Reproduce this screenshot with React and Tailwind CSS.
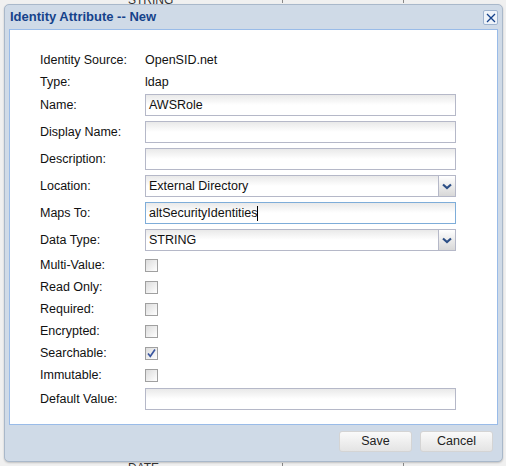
import { useState } from 'react'

const FONT = { fontFamily: '"Liberation Sans", Arial, sans-serif' }

function TextField({ value = '', focused = false }) {
  return (
    <div
      className={`h-[22px] w-[311px] flex items-center px-[3px] border text-[12.5px] text-[#111] bg-gradient-to-b from-[#e9e9e9] via-white to-white ${focused ? 'border-[#7eadd9]' : 'border-[#b5b8c8]'}`}
    >
      <span>{value}</span>
      {focused && <span className="w-px h-[15px] bg-black" />}
    </div>
  )
}

function Combo({ value }) {
  return (
    <div className="h-[22px] w-[311px] flex border border-[#b5b8c8] text-[12.5px] text-[#111]">
      <div className="flex-1 flex items-center px-[3px] bg-gradient-to-b from-[#e9e9e9] via-white to-white">{value}</div>
      <div className="w-[17px] border-l border-[#b5b8c8] flex items-center justify-center bg-gradient-to-b from-white to-[#d8d8d8]">
        <svg width="10" height="7" viewBox="0 0 10 7">
          <path d="M1 1.5 L5 5 L9 1.5" fill="none" stroke="#2d4f86" strokeWidth="2.2" />
        </svg>
      </div>
    </div>
  )
}

function Check({ checked }) {
  return (
    <div className="w-[13px] h-[13px] border border-[#a0a0a0] bg-gradient-to-br from-[#dcdcdc] to-white flex items-center justify-center">
      {checked && (
        <svg width="11" height="11" viewBox="0 0 11 11">
          <path d="M2 5.5 L4.3 8.3 L9 1.5" fill="none" stroke="#3a56a0" strokeWidth="1.6" />
        </svg>
      )}
    </div>
  )
}

function Row({ label, h = 'h-[22px]', mb = '', children }) {
  return (
    <div className={`flex items-center ${h} ${mb}`}>
      <div className="w-[105px] text-[12.5px] text-[#111]">{label}</div>
      {children}
    </div>
  )
}

export default function App() {
  const [searchable] = useState(true)

  return (
    <div className="relative w-[506px] h-[466px] overflow-hidden bg-[#f0f0f0]" style={FONT}>
      {/* page behind the dialog */}
      <div className="absolute left-[128px] top-[-9px] text-[12px] text-[#333]">STRING</div>
      <div className="absolute left-[128px] top-[459px] text-[12px] text-[#333]">DATE</div>
      <div className="absolute left-[282px] top-0 w-px h-[3px] bg-[#888]" />
      <div className="absolute left-[403px] top-0 w-px h-[3px] bg-[#888]" />
      <div className="absolute left-[282px] top-[463px] w-px h-[3px] bg-[#888]" />
      <div className="absolute left-[403px] top-[463px] w-px h-[3px] bg-[#888]" />

      {/* dialog */}
      <div className="absolute left-[4px] top-[4px] w-[499px] h-[458px] rounded-[5px] border border-[#a9b8ca] bg-[#cfdae7] flex flex-col shadow-[0_1px_2px_rgba(0,0,0,0.2)]">
        <div className="h-[24px] flex items-center justify-between pl-[5px] pr-[4px]">
          <span className="text-[13px] font-bold text-[#15428b]">Identity Attribute -- New</span>
          <div className="w-[15px] h-[15px] mt-[1px] rounded-[2px] border border-[#9fb4cf] bg-[#eef3f9] flex items-center justify-center">
            <svg width="10" height="10" viewBox="0 0 10 10">
              <path d="M1 1 L9 9 M9 1 L1 9" stroke="#15428b" strokeWidth="1.3" />
            </svg>
          </div>
        </div>

        <div className="mx-[4px] h-[396px] bg-white border border-[#99bbe8] pl-[30px] pt-[19px]">
          <Row label="Identity Source:">
            <span className="text-[12.5px] text-[#111]">OpenSID.net</span>
          </Row>
          <Row label="Type:" h="h-[23px]">
            <span className="text-[12.5px] text-[#111]">ldap</span>
          </Row>
          <Row label="Name:" mb="mb-[5px]"><TextField value="AWSRole" /></Row>
          <Row label="Display Name:" mb="mb-[5px]"><TextField /></Row>
          <Row label="Description:" mb="mb-[5px]"><TextField /></Row>
          <Row label="Location:" mb="mb-[5px]"><Combo value="External Directory" /></Row>
          <Row label="Maps To:" mb="mb-[5px]"><TextField value="altSecurityIdentities" focused /></Row>
          <Row label="Data Type:" mb="mb-[3px]"><Combo value="STRING" /></Row>
          <Row label="Multi-Value:"><Check /></Row>
          <Row label="Read Only:"><Check /></Row>
          <Row label="Required:"><Check /></Row>
          <Row label="Encrypted:"><Check /></Row>
          <Row label="Searchable:"><Check checked={searchable} /></Row>
          <Row label="Immutable:" mb="mb-[2px]"><Check /></Row>
          <Row label="Default Value:"><TextField /></Row>
        </div>

        <div className="flex-1 flex justify-end items-start gap-[8px] pt-[6px] pr-[9px]">
          <button className="w-[73px] h-[21px] rounded-[3px] border border-[#d4d4d4] bg-gradient-to-b from-[#fafafa] to-[#e4e4e4] text-[12.5px] text-[#222]">Save</button>
          <button className="w-[73px] h-[21px] rounded-[3px] border border-[#d4d4d4] bg-gradient-to-b from-[#fafafa] to-[#e4e4e4] text-[12.5px] text-[#222]">Cancel</button>
        </div>
      </div>
    </div>
  )
}
